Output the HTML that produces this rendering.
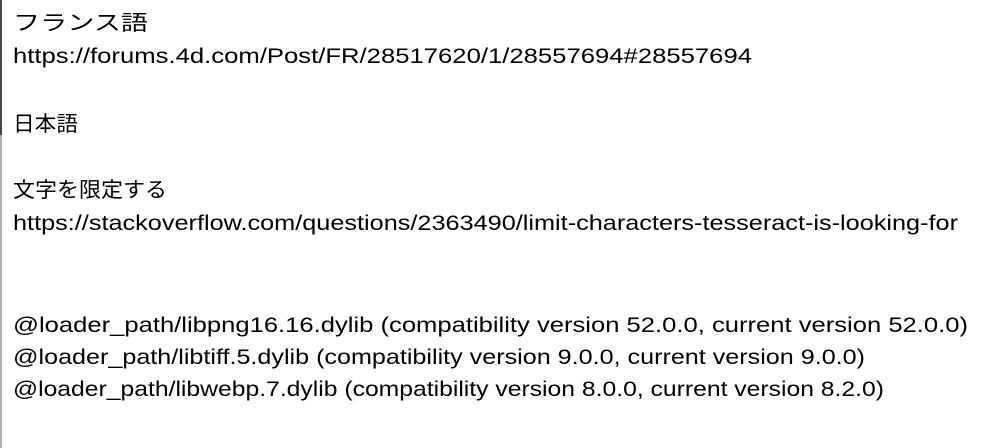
<!DOCTYPE html>
<html><head><meta charset="utf-8"><style>
html,body{margin:0;padding:0;background:#fff;width:998px;height:448px;overflow:hidden}
svg{display:block}
text{font-family:"Liberation Sans","Noto Sans CJK JP",sans-serif;font-size:21px;fill:#000}
</style></head><body>
<svg width="998" height="448" xmlns="http://www.w3.org/2000/svg">
<rect x="0" y="0" width="2" height="135" fill="#444"/>
<rect x="0" y="135" width="2" height="313" fill="#b0b0b0"/>
<text x="13" y="30" textLength="135" lengthAdjust="spacingAndGlyphs">フランス語</text>
<text x="13" y="63" textLength="739" lengthAdjust="spacingAndGlyphs">https://forums.4d.com/Post/FR/28517620/1/28557694#28557694</text>
<text x="13" y="131" textLength="65" lengthAdjust="spacingAndGlyphs">日本語</text>
<text x="13" y="197" textLength="154" lengthAdjust="spacingAndGlyphs">文字を限定する</text>
<text x="13" y="230" textLength="945" lengthAdjust="spacingAndGlyphs">https://stackoverflow.com/questions/2363490/limit-characters-tesseract-is-looking-for</text>
<text x="13" y="332" textLength="955" lengthAdjust="spacingAndGlyphs">@loader_path/libpng16.16.dylib (compatibility version 52.0.0, current version 52.0.0)</text>
<text x="13" y="364" textLength="852" lengthAdjust="spacingAndGlyphs">@loader_path/libtiff.5.dylib (compatibility version 9.0.0, current version 9.0.0)</text>
<text x="13" y="396" textLength="871" lengthAdjust="spacingAndGlyphs">@loader_path/libwebp.7.dylib (compatibility version 8.0.0, current version 8.2.0)</text>
</svg>
</body></html>
